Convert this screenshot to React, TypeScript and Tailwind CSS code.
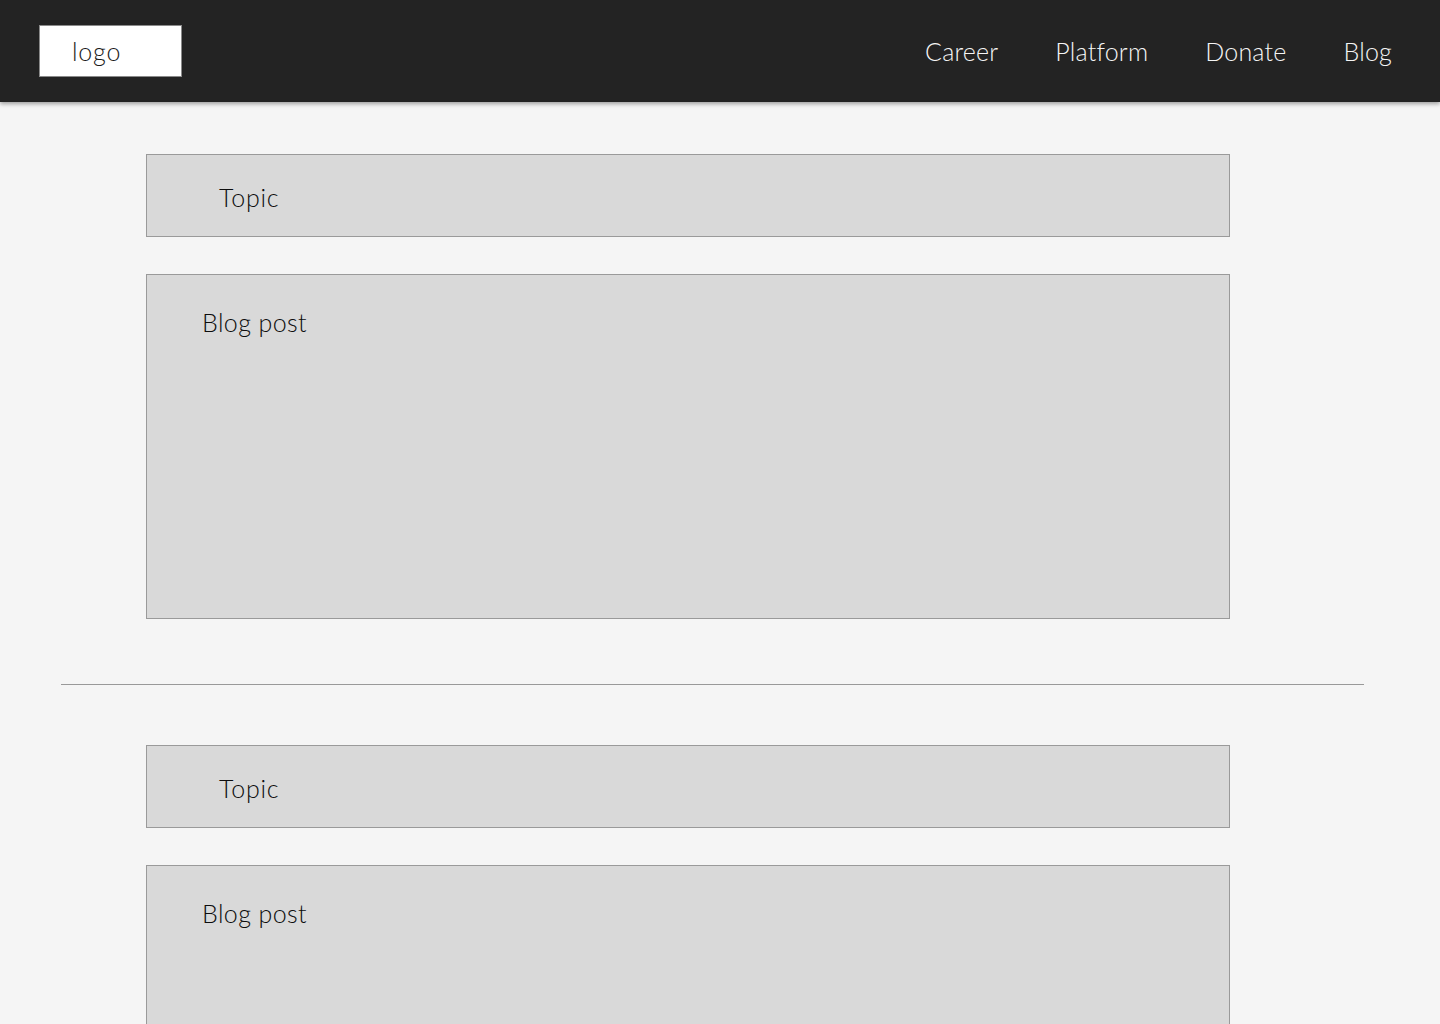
const navItems = ["Career", "Platform", "Donate", "Blog"];

function TopicBar() {
  return (
    <div className="w-[1084px] h-[83px] bg-[#d9d9d9] border border-[#9a9a9a] pl-[72px] pt-[27px]">
      <span className="text-[25px] leading-[30px] font-light tracking-[0.8px] text-[#0d0d0d]">Topic</span>
    </div>
  );
}

function BlogPost() {
  return (
    <div className="w-[1084px] h-[345px] bg-[#d9d9d9] border border-[#9a9a9a] pl-[55px] pt-[32px]">
      <span className="text-[25px] leading-[30px] font-light tracking-[0.4px] text-[#0d0d0d]">Blog post</span>
    </div>
  );
}

export default function App() {
  return (
    <div
      className="min-h-screen h-[1024px] overflow-hidden bg-[#f5f5f5]"
      style={{ fontFamily: "Lato, 'Open Sans', sans-serif" }}
    >
      {/* Header */}
      <header className="relative z-10 h-[102px] bg-[#232323] shadow-[0_2px_4px_rgba(0,0,0,0.35)] flex items-center justify-between pl-[39px] pr-[48px]">
        <div className="w-[143px] h-[52px] bg-white border border-[#8a8a8a] flex items-center pl-[32px]">
          <span className="text-[25px] font-light tracking-[0.8px] text-[#1a1a1a] leading-none">logo</span>
        </div>
        <nav className="flex items-center gap-[57px]">
          {navItems.map((item) => (
            <a key={item} className="text-[25px] font-light tracking-[0.2px] text-[#f5f5f5] leading-none">
              {item}
            </a>
          ))}
        </nav>
      </header>

      {/* Content */}
      <main className="pt-[52px]">
        <section className="pl-[146px] flex flex-col gap-[37px]">
          <TopicBar />
          <BlogPost />
        </section>
        <div className="ml-[61px] w-[1303px] h-px bg-[#999] mt-[65px] mb-[60px]" />
        <section className="pl-[146px] flex flex-col gap-[37px]">
          <TopicBar />
          <BlogPost />
        </section>
      </main>
    </div>
  );
}
